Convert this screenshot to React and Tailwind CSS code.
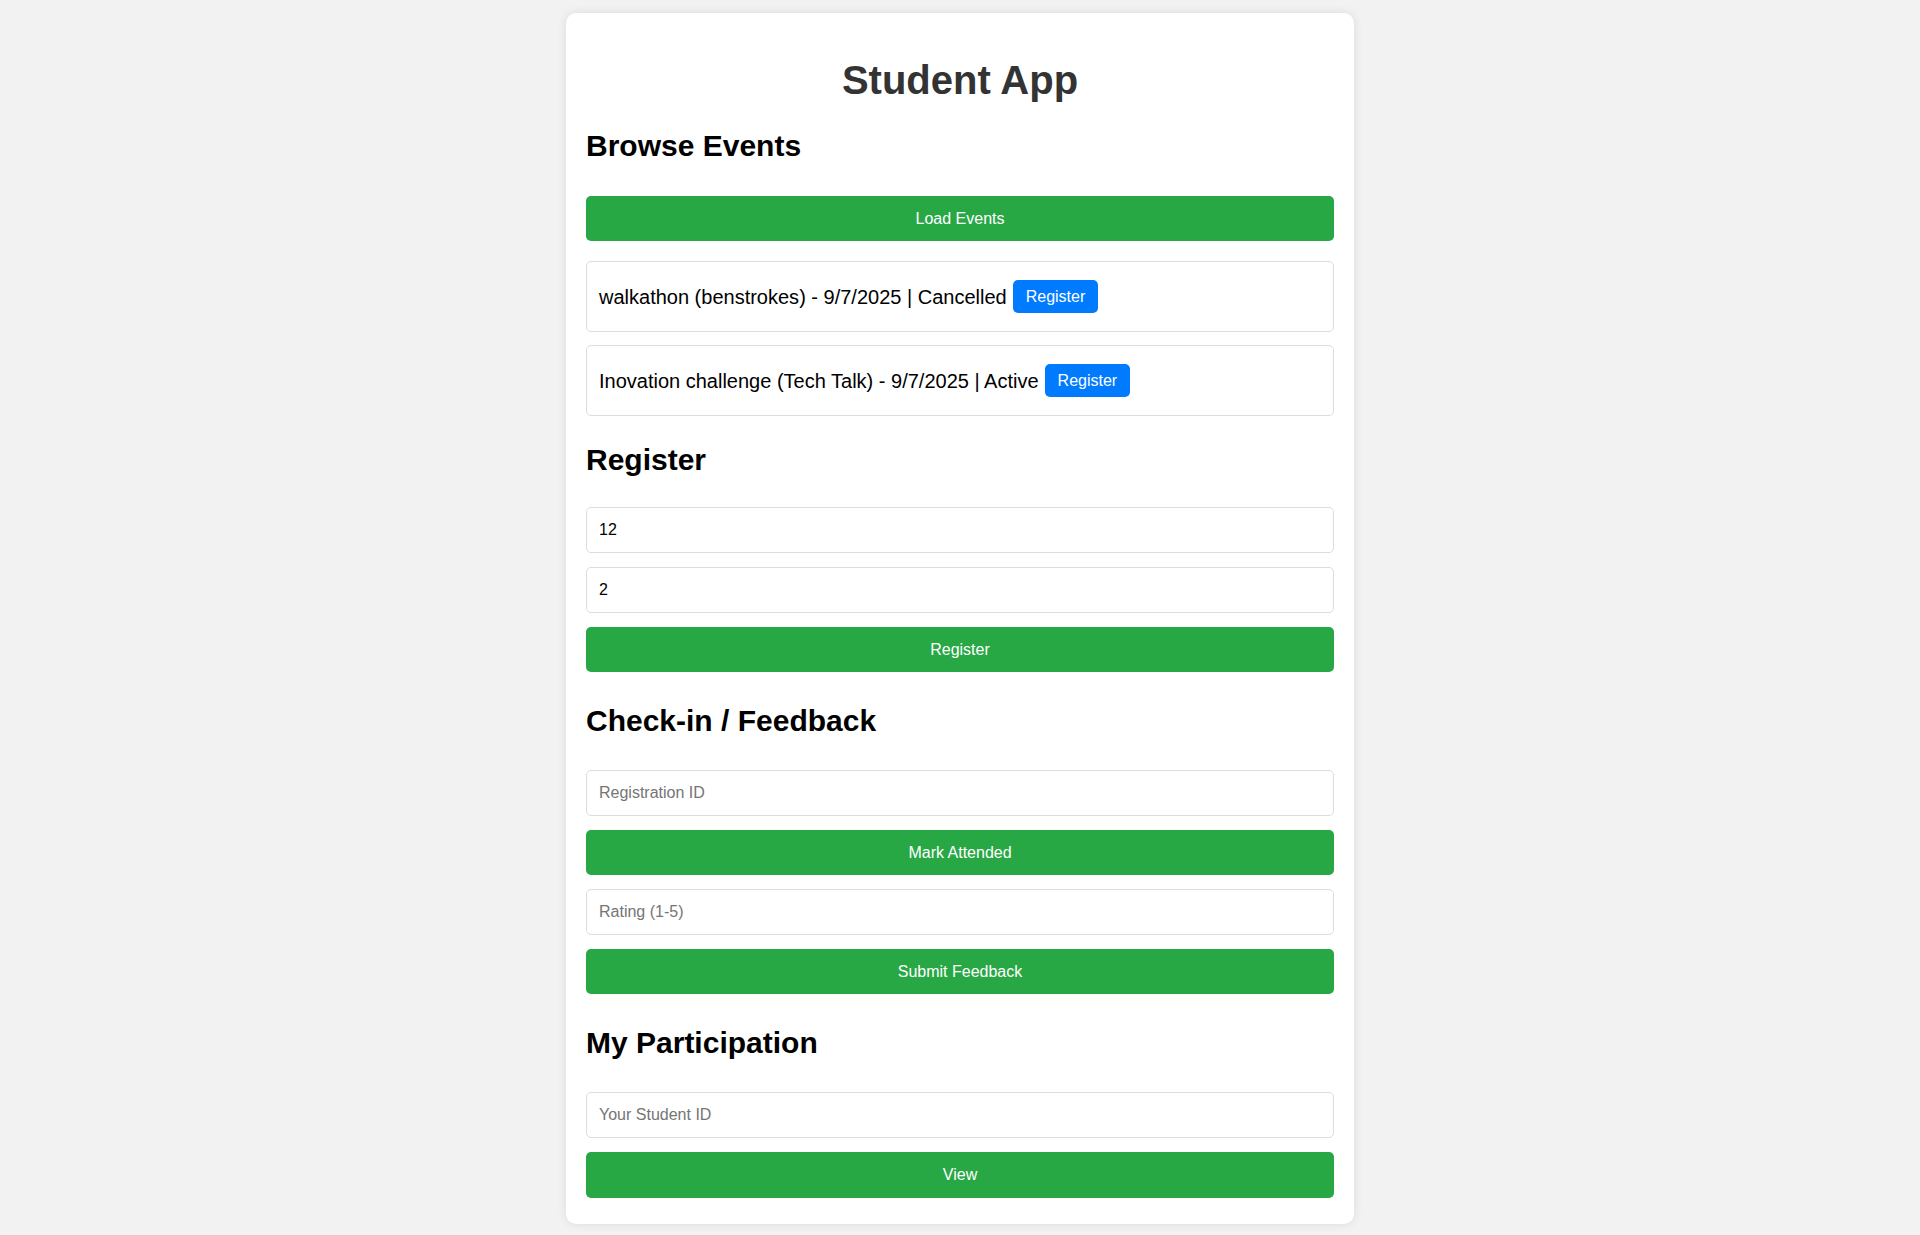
import { useState } from 'react';

const events = [
  { id: 1, title: 'walkathon', type: 'benstrokes', date: '9/7/2025', status: 'Cancelled' },
  { id: 2, title: 'Inovation challenge', type: 'Tech Talk', date: '9/7/2025', status: 'Active' },
];

const GreenButton = ({ children, className = '' }) => (
  <button
    type="button"
    className={`w-full h-[45px] rounded-[5px] bg-[#28a745] text-white text-[16px] ${className}`}
  >
    {children}
  </button>
);

const TextInput = ({ value, onChange, placeholder, className = '' }) => (
  <input
    type="text"
    value={value}
    onChange={onChange}
    placeholder={placeholder}
    className={`block w-full h-[46px] rounded-[5px] border border-[#ddd] bg-white px-3 text-[16px] text-black placeholder-[#757575] outline-none ${className}`}
  />
);

const SectionTitle = ({ children, className = '' }) => (
  <h2 className={`text-[30px] leading-[34px] font-bold text-black ${className}`}>{children}</h2>
);

export default function App() {
  const [studentId, setStudentId] = useState('12');
  const [eventId, setEventId] = useState('2');
  const [registrationId, setRegistrationId] = useState('');
  const [rating, setRating] = useState('');
  const [myId, setMyId] = useState('');

  return (
    <div className="min-h-[1235px] bg-[#f2f2f2] pt-[13px] pb-[13px] font-['Liberation_Sans',Arial,sans-serif]">
      <div className="mx-auto w-[788px] rounded-[10px] bg-white px-5 pt-5 pb-[26px] shadow-[0_0_10px_rgba(0,0,0,0.1)]">
        <h1 className="mt-[24px] text-center text-[40px] leading-[46px] font-bold text-[#333]">Student App</h1>

        <SectionTitle className="mt-[26px]">Browse Events</SectionTitle>
        <GreenButton className="mt-[33px]">Load Events</GreenButton>

        <div className="mt-[20px] flex flex-col gap-[13px]">
          {events.map((ev) => (
            <div
              key={ev.id}
              className="flex h-[71px] items-center rounded-[5px] border border-[#ddd] px-3 text-[20px] text-black"
            >
              <span>
                {ev.title} ({ev.type}) - {ev.date} | {ev.status}
              </span>
              <button
                type="button"
                className="ml-[6px] h-[33px] rounded-[5px] bg-[#007bff] px-[13px] text-[16px] text-white"
              >
                Register
              </button>
            </div>
          ))}
        </div>

        <SectionTitle className="mt-[27px]">Register</SectionTitle>
        <TextInput className="mt-[30px]" value={studentId} onChange={(e) => setStudentId(e.target.value)} />
        <TextInput className="mt-[14px]" value={eventId} onChange={(e) => setEventId(e.target.value)} />
        <GreenButton className="mt-[14px]">Register</GreenButton>

        <SectionTitle className="mt-[32px]">Check-in / Feedback</SectionTitle>
        <TextInput
          className="mt-[32px]"
          placeholder="Registration ID"
          value={registrationId}
          onChange={(e) => setRegistrationId(e.target.value)}
        />
        <GreenButton className="mt-[14px]">Mark Attended</GreenButton>
        <TextInput
          className="mt-[14px]"
          placeholder="Rating (1-5)"
          value={rating}
          onChange={(e) => setRating(e.target.value)}
        />
        <GreenButton className="mt-[14px]">Submit Feedback</GreenButton>

        <SectionTitle className="mt-[32px]">My Participation</SectionTitle>
        <TextInput
          className="mt-[32px]"
          placeholder="Your Student ID"
          value={myId}
          onChange={(e) => setMyId(e.target.value)}
        />
        <GreenButton className="mt-[14px] h-[46px]">View</GreenButton>
      </div>
    </div>
  );
}
